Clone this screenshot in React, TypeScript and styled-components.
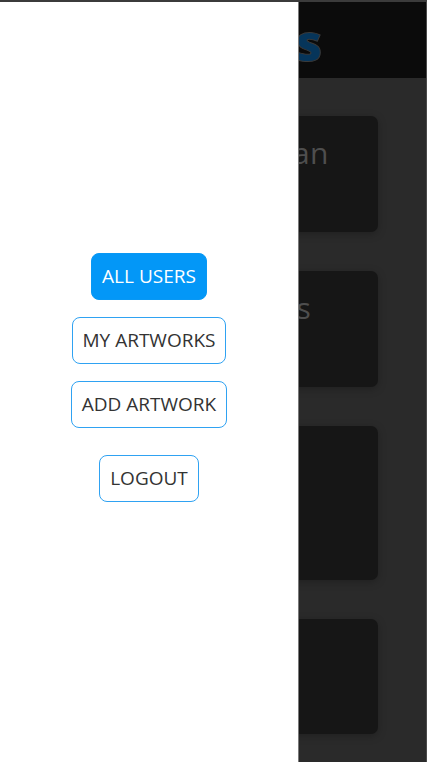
import React from "react";
import styled, { createGlobalStyle } from "styled-components";

const GlobalStyle = createGlobalStyle`
  html, body {
    margin: 0;
    padding: 0;
    background: #2a2a2a;
    font-family: "Open Sans", "Noto Sans", sans-serif;
  }
  * { box-sizing: border-box; }
`;

const Page = styled.div`
  min-height: 100vh;
  border-top: 2px solid #3b3b3b;
  border-right: 1px solid #4a4a4a;
  background: #2a2a2a;
  overflow: hidden;
`;

const Header = styled.header`
  height: 76px;
  background: #0b0b0b;
  display: flex;
  align-items: center;
  justify-content: center;
  padding-left: 69px;
`;

const Logo = styled.h1`
  margin: 0;
  font-family: "Open Sans", sans-serif;
  font-weight: 800;
  font-size: 52px;
  line-height: 1;
  color: #06355a;
  -webkit-text-stroke: 1px #3a3a3a;
  padding-top: 2px;
`;

const Main = styled.main`
  padding: 38px 48px 27px 49px;
  display: flex;
  flex-direction: column;
  gap: 39px;
`;

const Card = styled.div<{ $h: number }>`
  height: ${(p) => p.$h}px;
  background: #161616;
  border-radius: 7px;
  box-shadow: 0 2px 8px rgba(0, 0, 0, 0.25);
  padding-top: 16px;
  text-align: center;
`;

const CardTitle = styled.div<{ $spacing?: number }>`
  font-size: 30px;
  font-weight: 400;
  letter-spacing: ${(p) => p.$spacing ?? 0}px;
  color: #4e4e4e;
`;

const Drawer = styled.nav`
  position: fixed;
  top: 2px;
  left: 0;
  bottom: 0;
  width: 299px;
  background: #ffffff;
  border-right: 1px solid #7a7a7a;
  display: flex;
  flex-direction: column;
  align-items: center;
  justify-content: center;
  gap: 17px;
  padding-bottom: 10px;
`;

const NavButton = styled.button<{ $active?: boolean; $spaced?: boolean }>`
  font-family: "Open Sans", sans-serif;
  font-size: 19px;
  line-height: 25px;
  padding: 10px 10px;
  border-radius: 8px;
  border: 1px solid ${(p) => (p.$active ? "#0998f4" : "#2fa2f2")};
  background: ${(p) => (p.$active ? "#0397f7" : "#ffffff")};
  color: ${(p) => (p.$active ? "#ffffff" : "#333333")};
  margin-top: ${(p) => (p.$spaced ? "10px" : "0")};
  cursor: pointer;
`;

export default function App() {
  return (
    <>
      <GlobalStyle />
      <Page>
        <Header>
          <Logo>Users</Logo>
        </Header>
        <Main>
          <Card $h={116}>
            <CardTitle $spacing={0.4}>Lukas Sebastian</CardTitle>
          </Card>
          <Card $h={116}>
            <CardTitle>Georgina Hills</CardTitle>
          </Card>
          <Card $h={154} />
          <Card $h={115} />
        </Main>
      </Page>
      <Drawer>
        <NavButton $active>ALL USERS</NavButton>
        <NavButton>MY ARTWORKS</NavButton>
        <NavButton>ADD ARTWORK</NavButton>
        <NavButton $spaced>LOGOUT</NavButton>
      </Drawer>
    </>
  );
}
